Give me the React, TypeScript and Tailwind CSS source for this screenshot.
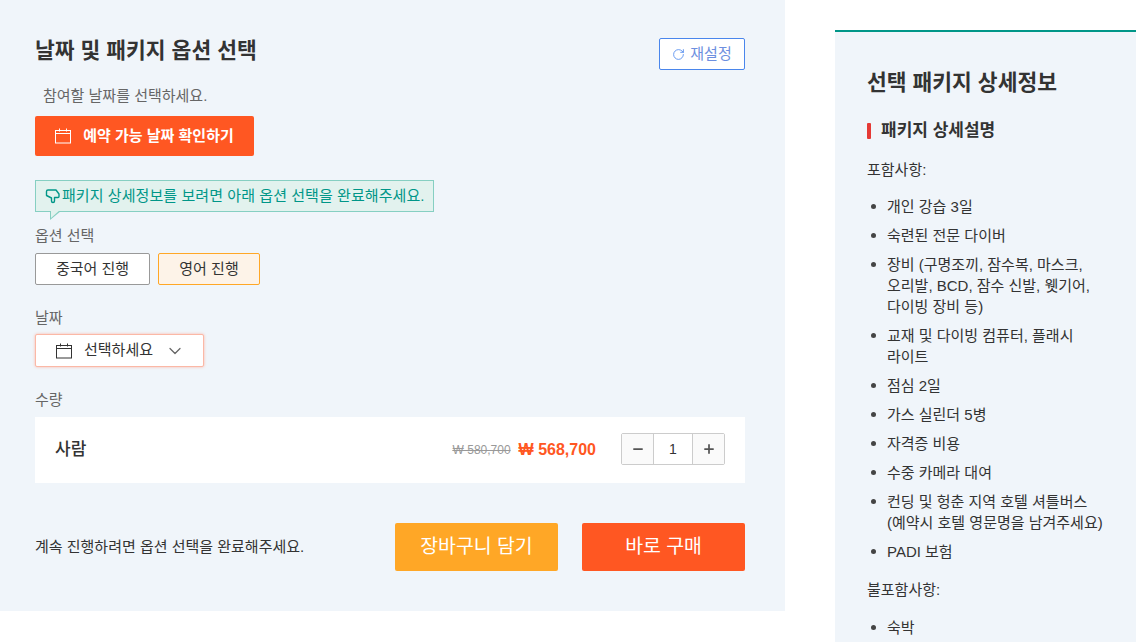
import { ChevronDown, Minus, Plus, RotateCw } from 'lucide-react'

const FONT = "font-['Liberation_Sans','Noto_Sans_CJK_KR',sans-serif]"

const CalendarIcon = ({ color }: { color: string }) => (
  <svg width="16" height="16" viewBox="0 0 16 16" fill="none" stroke={color} strokeWidth="1">
    <rect x="0.5" y="2.5" width="15" height="12.5" />
    <path d="M0.5 5.5H15.5M4.5 0.5V3.5M11.5 0.5V3.5" />
  </svg>
)

const ThumbIcon = () => (
  <svg width="15" height="16" viewBox="0 0 15 16" fill="none" stroke="currentColor" strokeWidth="1.4" strokeLinejoin="round" className="shrink-0">
    <path d="M3 2h8l3 4v2.5a1 1 0 0 1-1 1H9.5V13a1.5 1.5 0 0 1-3 0V10L1.5 7.5V3.5A1.5 1.5 0 0 1 3 2z" />
  </svg>
)

const included = [
  ['개인 강습 3일'],
  ['숙련된 전문 다이버'],
  ['장비 (구명조끼, 잠수복, 마스크,', '오리발, BCD, 잠수 신발, 웻기어,', '다이빙 장비 등)'],
  ['교재 및 다이빙 컴퓨터, 플래시', '라이트'],
  ['점심 2일'],
  ['가스 실린더 5병'],
  ['자격증 비용'],
  ['수중 카메라 대여'],
  ['컨딩 및 헝춘 지역 호텔 셔틀버스', '(예약시 호텔 영문명을 남겨주세요)'],
  ['PADI 보험'],
]

const BulletList = ({ items }: { items: string[][] }) => (
  <ul className="flex flex-col gap-[8px]">
    {items.map((lines, i) => (
      <li key={i} className="flex text-[15px] leading-[21px] text-[#333]">
        <span className="mt-[8px] ml-[4px] mr-[11px] h-[5px] w-[5px] shrink-0 rounded-full bg-[#444]"></span>
        <span>
          {lines.map((l, j) => (
            <span key={j} className="block whitespace-nowrap">{l}</span>
          ))}
        </span>
      </li>
    ))}
  </ul>
)

export default function App() {
  return (
    <div className={`${FONT} flex h-[642px] w-[1136px] items-start overflow-hidden bg-white`}>
      <section className="h-[611px] w-[785px] shrink-0 bg-[#f0f5fa] pl-[35px] pr-[40px] pt-[37px]">
        <div className="flex items-start justify-between">
          <h2 className="text-[21.5px] font-bold leading-[28px] text-[#333]">날짜 및 패키지 옵션 선택</h2>
          <button className="mt-px flex h-[32px] w-[86px] items-center justify-center gap-[5px] rounded-[2px] border border-[#4a86ec] bg-white text-[15px] text-[#6d8fe0]">
            <RotateCw size={13} strokeWidth={1.5} className="text-[#4a86ec]" />
            재설정
          </button>
        </div>

        <p className="ml-[8px] mt-[16px] text-[15px] leading-[20px] text-[#666]">참여할 날짜를 선택하세요.</p>

        <button className="mt-[10px] flex h-[40px] w-[219px] items-center justify-center gap-[12px] rounded-[2px] bg-[#ff5722] text-[15px] font-bold text-white">
          <CalendarIcon color="#fff" />
          예약 가능 날짜 확인하기
        </button>

        <div className="relative mt-[24px] flex h-[32px] w-[399px] items-center gap-[2px] border border-[#86cfc2] bg-[#e2f2ee] pl-[9px] text-[15px] tracking-[0.07px] text-[#009688]">
          <ThumbIcon />
          패키지 상세정보를 보려면 아래 옵션 선택을 완료해주세요.
          <span className="absolute left-[14px] top-[30px] h-0 w-0 border-r-[11px] border-t-[9px] border-r-transparent border-t-[#86cfc2]"></span>
          <span className="absolute left-[15px] top-[29px] h-0 w-0 border-r-[9px] border-t-[8px] border-r-transparent border-t-[#e2f2ee]"></span>
        </div>

        <p className="mt-[14px] text-[15px] leading-[20px] text-[#666]">옵션 선택</p>

        <div className="mt-[7px] flex gap-[8px]">
          <button className="h-[32px] w-[115px] rounded-[2px] border border-[#999] bg-white text-[15px] text-[#333]">중국어 진행</button>
          <button className="h-[32px] w-[102px] rounded-[2px] border border-[#ffa726] bg-[#fdf3e8] text-[15px] text-[#333]">영어 진행</button>
        </div>

        <p className="mt-[23px] text-[15px] leading-[20px] text-[#666]">날짜</p>

        <button className="mt-[6px] flex h-[33px] w-[169px] items-center rounded-[2px] border border-[#fbb8a6] bg-white pl-[20px] text-[15px] text-[#333] shadow-[0_0_3px_#fbb8a6]">
          <CalendarIcon color="#333" />
          <span className="ml-[12px]">선택하세요</span>
          <ChevronDown size={20} strokeWidth={1.5} className="ml-[12px] text-[#666]" />
        </button>

        <p className="mt-[23px] text-[15px] leading-[20px] text-[#666]">수량</p>

        <div className="mt-[7px] flex h-[66px] items-center bg-white pl-[20px] pr-[20px]">
          <span className="text-[17px] font-medium text-[#333]">사람</span>
          <span className="ml-auto text-[12px] text-[#999] line-through">₩ 580,700</span>
          <span className="ml-[8px] text-[16px] font-bold text-[#ff5722]">₩ 568,700</span>
          <div className="-mt-[2px] ml-[25px] flex h-[32px] w-[104px] rounded-[2px] border border-[#ccc]">
            <span className="flex w-[31px] items-center justify-center bg-[#fafafa] text-[#555]"><Minus size={14} strokeWidth={3} /></span>
            <span className="flex flex-1 items-center justify-center border-x border-[#ccc] bg-white text-[14px] text-[#333]">1</span>
            <span className="flex w-[31px] items-center justify-center bg-[#fafafa] text-[#555]"><Plus size={14} strokeWidth={3} /></span>
          </div>
        </div>

        <div className="mt-[40px] flex items-center">
          <span className="text-[15px] text-[#333]">계속 진행하려면 옵션 선택을 완료해주세요.</span>
          <button className="ml-auto h-[48px] w-[163px] rounded-[2px] bg-[#ffa726] text-[19.4px] text-white">장바구니 담기</button>
          <button className="ml-[24px] h-[48px] w-[163px] rounded-[2px] bg-[#ff5722] text-[19.4px] text-white">바로 구매</button>
        </div>
      </section>

      <aside className="ml-[50px] mt-[30px] h-[612px] w-[301px] shrink-0 border-t-2 border-[#009688] bg-[#f0f5fa] pl-[32px] pt-[37px]">
        <h3 className="text-[21.5px] font-bold leading-[28px] text-[#333]">선택 패키지 상세정보</h3>
        <div className="mt-[22px] flex items-center gap-[10px]">
          <span className="h-[16px] w-[4px] rounded-[1px] bg-[#e53935]"></span>
          <span className="text-[17px] font-bold leading-[24px] text-[#333]">패키지 상세설명</span>
        </div>
        <p className="mt-[17px] text-[15px] leading-[20px] text-[#333]">포함사항:</p>
        <div className="mt-[16px]">
          <BulletList items={included} />
        </div>
        <p className="mt-[18px] text-[15px] leading-[20px] text-[#333]">불포함사항:</p>
        <div className="mt-[17px]">
          <BulletList items={[['숙박']]} />
        </div>
      </aside>
    </div>
  )
}
